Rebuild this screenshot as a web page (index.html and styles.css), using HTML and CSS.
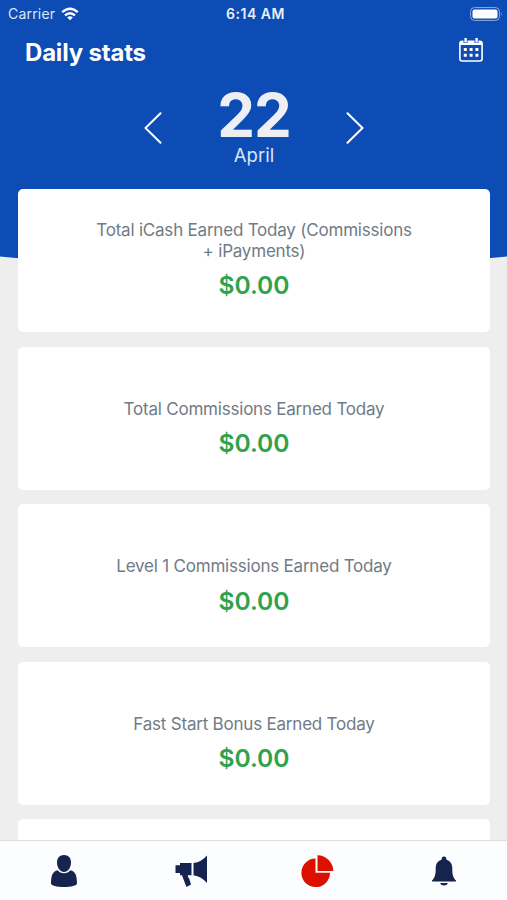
FILE: index.html
```html
<!DOCTYPE html>
<html lang="en">
<head>
<meta charset="utf-8">
<meta name="viewport" content="width=device-width, initial-scale=1">
<title>Daily stats</title>
<link rel="stylesheet" href="styles.css">
</head>
<body>
<div class="screen">
  <svg class="backdrop" viewBox="0 0 507 280" preserveAspectRatio="none" aria-hidden="true"><path d="M0 0H507V256.500Q253.500 284 0 256.500Z" fill="#0d4cb5"/></svg>
  <div class="status">
    <div class="carrier"><span>Carrier</span>
      <svg width="18" height="14" viewBox="0 0 18 14" fill="none" stroke="#fff" stroke-width="2.300"><path d="M1.200 5.200Q9-1.800 16.800 5.200M4 8.400Q9 4 14 8.400"/><path d="M6.200 10.500Q9 8.200 11.800 10.500L9 13.300Z" fill="#fff" stroke="none"/></svg>
    </div>
    <span class="time">6:14 AM</span>
    <svg class="battery" width="33" height="14" viewBox="0 0 33 14"><rect x=".6" y=".6" width="28.800" height="12.800" rx="3.800" fill="none" stroke="#8eaee0" stroke-width="1"/><rect x="2.500" y="2.400" width="25" height="9.200" rx="2" fill="#fff"/><path d="M31 4.800Q32.500 7 31 9.200Z" fill="#8eaee0"/></svg>
  </div>
  <header class="title-row">
    <h1>Daily stats</h1>
    <svg width="24" height="24" viewBox="0 0 24 24"><rect x=".9" y="3.200" width="22.200" height="19.800" rx="2.200" fill="none" stroke="#fff" stroke-width="1.600"/><path d="M1 3H23V7H1Z" fill="#fff"/><path d="M4.500 0H8.500V5H4.500ZM15.500 0H19.500V5H15.500Z" fill="#0d4cb5"/><path d="M5.400 0H7.800V4.600H5.400ZM16.400 0H18.800V4.600H16.400Z" fill="#fff"/><path d="M4.800 10h3v3h-3zM10.600 10h3v3h-3zM16.400 10h3v3h-3zM4.800 15.800h3v3h-3zM10.600 15.800h3v3h-3zM16.400 15.800h3v3h-3z" fill="#fff"/></svg>
  </header>
  <div class="date-row">
    <svg width="18" height="32" viewBox="0 0 18 32" fill="none" stroke="#fff" stroke-width="2" stroke-linecap="round"><path d="M16.500 1.200L1.500 16L16.500 30.800"/></svg>
    <div class="date"><span class="day">22</span><span class="month">April</span></div>
    <svg width="18" height="32" viewBox="0 0 18 32" fill="none" stroke="#fff" stroke-width="2" stroke-linecap="round"><path d="M1.500 1.200L16.500 16L1.500 30.800"/></svg>
  </div>
  <main class="cards">
    <section class="card"><p class="label">Total iCash Earned Today (Commissions<br>+ iPayments)</p><p class="amount">$0.00</p></section>
    <section class="card"><p class="label">Total Commissions Earned Today</p><p class="amount">$0.00</p></section>
    <section class="card"><p class="label">Level 1 Commissions Earned Today</p><p class="amount">$0.00</p></section>
    <section class="card"><p class="label">Fast Start Bonus Earned Today</p><p class="amount">$0.00</p></section>
    <section class="card"></section>
  </main>
  <nav class="tabs">
    <svg width="34" height="34" viewBox="0 0 34 34" fill="#16234f"><path d="M17 1C21.500 1 24 4 24 8.500C24 13.500 21 18 17 18S10 13.500 10 8.500C10 4 12.500 1 17 1Z"/><path d="M10.600 16.300Q13 19.300 17 19.300T23.400 16.300C28 17.300 30 21 30 29.500C30 31.500 24 33 17 33S4 31.500 4 29.500C4 21 6 17.300 10.600 16.300Z"/></svg>
    <svg width="34" height="34" viewBox="0 0 34 34" fill="#16234f"><path d="M33 1.500V29Q27.500 22.500 19.500 21.200V9Q27.500 8 33 1.500ZM6 9H17.500V21.200H13.800L14.200 23.500L15.200 24.500L17 30.500L12.500 33L8.200 22V21.200H6V19H1.500V11.200H6Z"/></svg>
    <svg width="34" height="34" viewBox="0 0 34 34" fill="#dc1000"><path d="M15.500 4.500V18.800H30A14.300 14.300 0 1 1 15.500 4.500Z"/><path d="M17.500 1.200A16 16 0 0 1 33.300 17H17.500Z"/></svg>
    <svg width="34" height="34" viewBox="0 0 34 34" fill="#16234f"><path d="M17 2.500C18.700 2.500 19.500 3.700 19.300 5.500C23.500 7 25.300 10 25.300 14.500C25.300 21 26 23.500 29 26.500V27.600H5V26.500C8 23.500 8.700 21 8.700 14.500C8.700 10 10.500 7 14.700 5.500C14.500 3.700 15.300 2.500 17 2.500Z"/><path d="M13 29H21Q20 31.500 17 31.500T13 29Z"/></svg>
  </nav>
</div>
</body>
</html>
```

FILE: styles.css
```css
* { box-sizing: border-box; }
body { margin: 0; font-family: Inter, "Liberation Sans", sans-serif; }
h1, p { margin: 0; }
svg { display: block; flex: none; }
.screen {
  position: relative;
  isolation: isolate;
  display: flex;
  flex-direction: column;
  width: 507px;
  height: 900px;
  overflow: hidden;
  background: #eee;
  color: #fff;
}
.backdrop { position: absolute; top: 0; left: 0; z-index: -1; width: 507px; height: 280px; }
.status {
  display: grid;
  grid-template-columns: 1fr auto 1fr;
  align-items: center;
  height: 27px;
  padding: 0 4px 0 8px;
  font-size: 14px;
}
.carrier { display: flex; align-items: center; gap: 6px; color: #dce6f8; letter-spacing: .2px; }
.time { font-weight: 600; letter-spacing: .5px; color: #e8effb; }
.battery { justify-self: end; }
.title-row {
  display: flex;
  align-items: flex-start;
  justify-content: space-between;
  height: 49px;
  padding: 11px 24px 0 25px;
}
h1 { font-size: 24px; line-height: 30px; font-weight: 700; letter-spacing: -.2px; }
.date-row {
  display: flex;
  align-items: center;
  justify-content: center;
  gap: 55px;
  height: 113px;
  padding: 0 0 9px 1px;
}
.date { display: flex; flex-direction: column; align-items: center; width: 74px; margin-top: -7px; }
.day { font-size: 60px; line-height: 60px; font-weight: 700; letter-spacing: -1px; color: #eeeef5; }
.month { font-size: 18.500px; line-height: 20px; color: #dce4f5; }
.cards {
  display: flex;
  flex: 1;
  flex-direction: column;
  gap: 14.600px;
  min-height: 0;
  padding: 0 17px 0 18px;
  overflow: hidden;
}
.card {
  display: flex;
  flex: none;
  flex-direction: column;
  justify-content: flex-end;
  align-items: center;
  height: 143px;
  padding-bottom: 30.600px;
  border-radius: 5px;
  background: #fff;
}
.label { font-size: 17px; line-height: 20.500px; letter-spacing: -.21px; color: #717b85; text-align: center; white-space: nowrap; }
.amount { margin-top: 9px; font-size: 24.600px; line-height: 31px; font-weight: 600; color: #30a24c; }
.tabs {
  display: grid;
  grid-template-columns: repeat(4, 1fr);
  justify-items: center;
  height: 60px;
  padding: 13px 0 0 1px;
  border-top: 1px solid #dedfe0;
  background: #fcfdfe;
}
```
